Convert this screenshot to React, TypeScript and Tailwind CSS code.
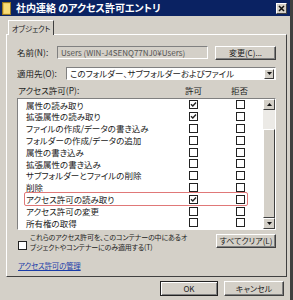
import React from "react";

const rows = [
  { label: "属性の読み取り", allow: true },
  { label: "拡張属性の読み取り", allow: true },
  { label: "ファイルの作成/データの書き込み", allow: false },
  { label: "フォルダーの作成/データの追加", allow: false },
  { label: "属性の書き込み", allow: false },
  { label: "拡張属性の書き込み", allow: false },
  { label: "サブフォルダーとファイルの削除", allow: false },
  { label: "削除", allow: false },
  { label: "アクセス許可の読み取り", allow: true, mark: true },
  { label: "アクセス許可の変更", allow: false },
  { label: "所有権の取得", allow: false },
];

function Box({ checked }: { checked?: boolean }) {
  return (
    <span className="flex h-[9px] w-[9px] items-center justify-center border border-[#222] bg-white">
      {checked && (
        <svg width="7" height="7" viewBox="0 0 7 7">
          <path d="M1 3.2 L2.8 5 L6 1.5" fill="none" stroke="#222" strokeWidth="1.4" />
        </svg>
      )}
    </span>
  );
}

function Button({ children, def, className = "" }: { children: React.ReactNode; def?: boolean; className?: string }) {
  return (
    <div
      className={`flex items-center justify-center whitespace-nowrap border bg-[#d4d0c8] text-[8px] text-[#222] ${
        def
          ? "border-[#222] shadow-[inset_1px_1px_0_#fff,inset_-1px_-1px_0_#808080]"
          : "border-t-white border-l-white border-r-[#404040] border-b-[#404040] shadow-[inset_-1px_-1px_0_#808080]"
      } ${className}`}
    >
      {children}
    </div>
  );
}

export default function App() {
  return (
    <div
      className="flex h-[300px] w-[293px] flex-col overflow-hidden whitespace-nowrap border-r-[3px] border-r-[#404040] bg-[#d4d0c8] text-[8px] leading-none text-[#222] [font-feature-settings:'palt']"
      style={{ fontFamily: '"Noto Sans CJK JP", "Noto Sans", sans-serif' }}
    >
      {/* title bar */}
      <div className="flex h-[16px] items-center bg-[#0a2262] pl-[2px] pr-[3px]">
        <svg width="10" height="13" viewBox="0 0 10 13" className="mr-[4px]">
          <rect x="0.5" y="0.5" width="8" height="12" fill="#e8c050" stroke="#9a7a20" />
          <rect x="2" y="1.5" width="6" height="10" fill="#f8dc78" />
        </svg>
        <span className="text-[10px] font-bold text-white">社内連絡 のアクセス許可エントリ</span>
        <span className="ml-auto flex h-[11px] w-[11px] items-center justify-center border border-t-white border-l-white border-r-[#404040] border-b-[#404040] bg-[#d4d0c8]">
          <svg width="7" height="7" viewBox="0 0 7 7">
            <path d="M1 1 L6 6 M6 1 L1 6" stroke="#111" strokeWidth="1.5" />
          </svg>
        </span>
      </div>

      <div className="flex flex-1 flex-col pl-[6px] pr-[3px]">
        {/* tab strip */}
        <div className="mt-[3px] flex h-[15px] items-end pl-[2px]">
          <div className="relative -mb-px flex h-[15px] w-[46px] items-center justify-center border border-b-0 border-t-white border-l-white border-r-[#404040] bg-[#d4d0c8] pt-[1px] text-[7.5px] tracking-[-0.2px]">
            オブジェクト
          </div>
        </div>

        {/* panel */}
        <div className="flex h-[243px] flex-col border border-t-white border-l-white border-r-[#404040] border-b-[#404040] pl-[10px] pr-[10px]">
          <div className="mt-[11px] flex h-[13px] items-center">
            <span className="w-[40px] text-[8.5px]">名前(N):</span>
            <div className="flex h-[13px] w-[151px] items-center border border-t-[#808080] border-l-[#808080] border-r-white border-b-white pl-[3px] text-[8px] text-[#555]">
              Users (WIN-J4SENQ77NJ0¥Users)
            </div>
            <Button className="ml-[7px] h-[14px] w-[61px]">変更(C)...</Button>
          </div>

          <div className="mt-[8px] flex h-[13px] items-center">
            <span className="w-[49px] text-[8.5px]">適用先(O):</span>
            <div className="flex h-[13px] flex-1 items-center border border-t-[#808080] border-l-[#808080] border-r-white border-b-white bg-white pl-[3px] pr-px">
              <span className="text-[8.5px]">このフォルダー、サブフォルダーおよびファイル</span>
              <span className="ml-auto flex h-[10px] w-[10px] items-center justify-center border border-t-white border-l-white border-r-[#404040] border-b-[#404040] bg-[#d4d0c8]">
                <svg width="5" height="3" viewBox="0 0 5 3">
                  <path d="M0 0 H5 L2.5 3 Z" fill="#111" />
                </svg>
              </span>
            </div>
          </div>

          <div className="mt-[5px] flex h-[10px] items-center pl-px">
            <span className="w-[162px] text-[8.5px]">アクセス許可(P):</span>
            <span className="w-[27px] text-center text-[8.5px]">許可</span>
            <span className="ml-[19px] w-[27px] text-center text-[8.5px]">拒否</span>
          </div>

          {/* permission list */}
          <div className="mt-[3px] flex h-[132px] border border-t-[#808080] border-l-[#808080] border-r-white border-b-white bg-white">
            <div className="flex flex-1 flex-col">
              {rows.map((r) => (
                <div key={r.label} className="relative flex h-[11.8px] items-center pl-[8px]">
                  <span className="w-[163px] text-[8.5px]">{r.label}</span>
                  <Box checked={r.allow} />
                  <span className="w-[38px]" />
                  <Box />
                  {r.mark && (
                    <span className="absolute left-[6px] top-[-1px] h-[14px] w-[224px] rounded-[2px] border border-[#e07878]" />
                  )}
                </div>
              ))}
            </div>
            {/* scrollbar */}
            <div className="flex w-[12px] flex-col bg-[#eceae6]">
              <div className="flex h-[11px] items-center justify-center border border-t-white border-l-white border-r-[#404040] border-b-[#404040] bg-[#d4d0c8]">
                <svg width="5" height="3" viewBox="0 0 5 3">
                  <path d="M0 3 H5 L2.5 0 Z" fill="#111" />
                </svg>
              </div>
              <div className="h-[19px]" />
              <div className="flex-1 border border-t-white border-l-white border-r-[#404040] border-b-[#404040] bg-[#d4d0c8]" />
              <div className="flex h-[11px] items-center justify-center border border-t-white border-l-white border-r-[#404040] border-b-[#404040] bg-[#d4d0c8]">
                <svg width="5" height="3" viewBox="0 0 5 3">
                  <path d="M0 0 H5 L2.5 3 Z" fill="#111" />
                </svg>
              </div>
            </div>
          </div>

          <div className="mt-[2px] flex items-start">
            <span className="mt-[9px] ml-px">
              <Box />
            </span>
            <div className="ml-[3px] flex w-[175px] flex-col text-[7px] leading-[10.2px] tracking-[-0.15px]">
              <div>これらのアクセス許可を、このコンテナーの中にあるオ</div>
              <div>ブジェクトやコンテナーにのみ適用する(T)</div>
            </div>
            <Button className="ml-auto mt-[2px] h-[14px] w-[60px]">すべてクリア(L)</Button>
          </div>

          <div className="mt-[10px] pl-px">
            <span className="text-[7.5px] tracking-[-0.2px] text-[#1a3ca8] underline">アクセス許可の管理</span>
          </div>
        </div>

        {/* footer buttons */}
        <div className="mt-[4px] flex justify-end gap-[6px] pr-[3px]">
          <Button def className="h-[15px] w-[58px]">OK</Button>
          <Button className="h-[15px] w-[60px]">キャンセル</Button>
        </div>
      </div>
    </div>
  );
}
